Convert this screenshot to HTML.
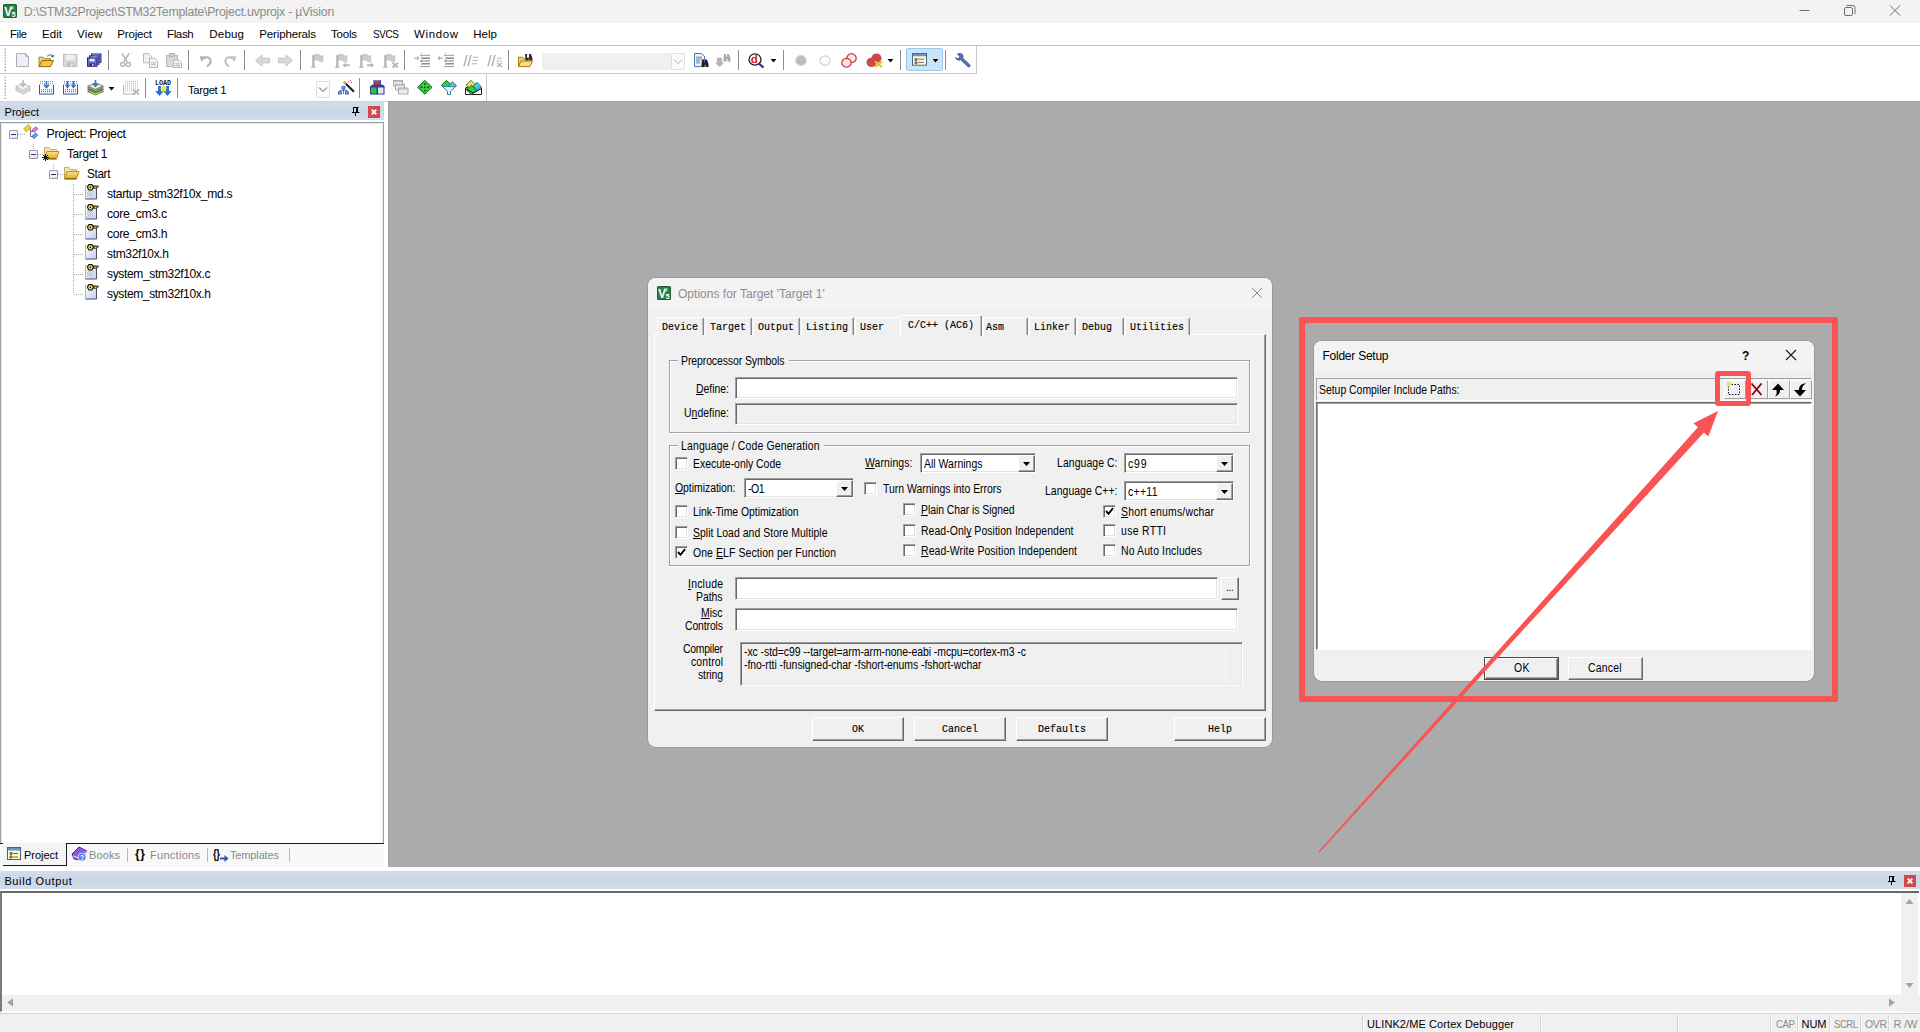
<!DOCTYPE html><html><head><meta charset="utf-8"><title>uVision</title><style>
html,body{margin:0;padding:0;}
body{width:1920px;height:1032px;overflow:hidden;background:#fff;position:relative;font-family:"Liberation Sans",sans-serif;}
div,span.t,svg{position:absolute;box-sizing:border-box;}
span.t{white-space:pre;display:block;}
u{text-decoration:underline;text-underline-offset:1px;text-decoration-thickness:1px;}
.sunk{border:1px solid;border-color:#a0a0a0 #fff #fff #a0a0a0;box-shadow:inset 1px 1px 0 #696969,inset -1px -1px 0 #e3e3e3;}
.btn{background:#f0f0f0;border:1px solid;border-color:#fff #696969 #696969 #fff;box-shadow:inset -1px -1px 0 #a0a0a0,inset 1px 1px 0 #f0f0f0;}
.cb{width:13px;height:13px;background:#fff;border:1px solid #333;}
.gb{border:1px solid #a0a0a0;box-shadow:1px 1px 0 #fff, inset 1px 1px 0 #fff;}
</style></head><body><div style="left:0px;top:0px;width:1920px;height:22.5px;background:#f3f3f3;"></div>
<svg style="left:3px;top:4px;" width="14" height="14" viewBox="0 0 14 14"><g transform="scale(1.0)"><rect x="0" y="0" width="14" height="14" rx="1.6" fill="#2f7d46"/>
<rect x="0.5" y="0.5" width="13" height="13" rx="1.4" fill="none" stroke="#215c33" stroke-width="1"/>
<text x="1.300" y="11.600" font-family="Liberation Sans, sans-serif" font-weight="700" font-size="12" fill="#fff" textLength="7.600" lengthAdjust="spacingAndGlyphs">V</text>
<text x="7.300" y="5.400" font-family="Liberation Sans, sans-serif" font-weight="700" font-size="5.500" fill="#e4f3e8">µ</text>
<text x="8.700" y="12.600" font-family="Liberation Sans, sans-serif" font-weight="700" font-size="6.800" fill="#fff">5</text></g></svg>
<span class="t" style="left:23.8px;top:4px;font:400 12.4px/16px 'Liberation Sans', sans-serif;color:#8b8b8b;letter-spacing:-0.270px;">D:\STM32Project\STM32Template\Project.uvprojx - µVision</span>
<svg style="left:1790px;top:0px;" width="130" height="22" viewBox="0 0 130 22"><g stroke="#6e6e6e" stroke-width="1" fill="none">
<path d="M9.5 10.5h10"/>
<rect x="54.5" y="7.5" width="8" height="8" rx="1.5"/><path d="M56.5 5.5h6.5a2 2 0 0 1 2 2v6.5"/>
<path d="M100 5.5l10 10M110 5.5l-10 10"/></g></svg>
<span class="t" style="left:9.5px;top:27px;font:400 11.5px/15px 'Liberation Sans', sans-serif;color:#000;letter-spacing:-0.359px;transform:scaleX(0.9741);transform-origin:0 0;">File</span>
<span class="t" style="left:42px;top:27px;font:400 11.5px/15px 'Liberation Sans', sans-serif;color:#000;letter-spacing:0.061px;">Edit</span>
<span class="t" style="left:77px;top:27px;font:400 11.5px/15px 'Liberation Sans', sans-serif;color:#000;letter-spacing:0.194px;">View</span>
<span class="t" style="left:117.3px;top:27px;font:400 11.5px/15px 'Liberation Sans', sans-serif;color:#000;letter-spacing:-0.182px;">Project</span>
<span class="t" style="left:167.3px;top:27px;font:400 11.5px/15px 'Liberation Sans', sans-serif;color:#000;letter-spacing:-0.350px;transform:scaleX(0.9992);transform-origin:0 0;">Flash</span>
<span class="t" style="left:209.3px;top:27px;font:400 11.5px/15px 'Liberation Sans', sans-serif;color:#000;letter-spacing:0.203px;">Debug</span>
<span class="t" style="left:259.3px;top:27px;font:400 11.5px/15px 'Liberation Sans', sans-serif;color:#000;letter-spacing:-0.147px;">Peripherals</span>
<span class="t" style="left:331px;top:27px;font:400 11.5px/15px 'Liberation Sans', sans-serif;color:#000;letter-spacing:-0.212px;">Tools</span>
<span class="t" style="left:373.3px;top:27px;font:400 11.5px/15px 'Liberation Sans', sans-serif;color:#000;letter-spacing:-0.410px;transform:scaleX(0.8542);transform-origin:0 0;">SVCS</span>
<span class="t" style="left:414px;top:27px;font:400 11.5px/15px 'Liberation Sans', sans-serif;color:#000;letter-spacing:0.620px;">Window</span>
<span class="t" style="left:473.3px;top:27px;font:400 11.5px/15px 'Liberation Sans', sans-serif;color:#000;letter-spacing:0.016px;">Help</span>
<div style="left:0px;top:45px;width:1920px;height:1px;background:#c0c0c0;"></div>
<div style="left:0px;top:73px;width:977px;height:1px;background:#c8c8c8;"></div>
<div style="left:976px;top:46px;width:1px;height:28px;background:#c8c8c8;"></div>
<div style="left:486px;top:74px;width:1px;height:28px;background:#c8c8c8;"></div>
<div style="left:0px;top:101px;width:487px;height:1px;background:#d4d4d4;"></div>
<svg style="left:4px;top:48px;" width="3" height="24" viewBox="0 0 3 24"><rect x="0.5" y="0.5" width="1.6" height="1.6" fill="#b4b4b4"/><rect x="0.5" y="3.5" width="1.6" height="1.6" fill="#b4b4b4"/><rect x="0.5" y="6.5" width="1.6" height="1.6" fill="#b4b4b4"/><rect x="0.5" y="9.5" width="1.6" height="1.6" fill="#b4b4b4"/><rect x="0.5" y="12.5" width="1.6" height="1.6" fill="#b4b4b4"/><rect x="0.5" y="15.5" width="1.6" height="1.6" fill="#b4b4b4"/><rect x="0.5" y="18.5" width="1.6" height="1.6" fill="#b4b4b4"/><rect x="0.5" y="21.5" width="1.6" height="1.6" fill="#b4b4b4"/></svg><svg style="left:16px;top:52.5px;" width="14" height="16" viewBox="0 0 14 16"><g transform="scale(1,.9375)"><path d="M0.5 0.5h9l3 3v11h-12z" fill="#efeff8" stroke="#a9a9b6"/><path d="M9.5 0.5v3h3" fill="#dcdce8" stroke="#a9a9b6"/></g></svg><svg style="left:38px;top:52.5px;" width="17" height="16" viewBox="0 0 17 16"><g transform="scale(1,.9375)"><path d="M1 14.5v-10h4l1.5 1.5h6v3" fill="#f3d77a" stroke="#a57a1a"/>
<path d="M1 14.5l3-6.5h11.5l-3 6.5z" fill="#f6c638" stroke="#8a6412"/>
<path d="M9.5 3.6c1.500-2.200 4-2.200 5 .2" fill="none" stroke="#5a6f8c" stroke-width="1.100"/><path d="M15.800 1.600l-.3 3.300-2.800-1.200z" fill="#3f587c"/></g></svg><svg style="left:63px;top:52.5px;" width="15" height="16" viewBox="0 0 15 16"><g transform="scale(1,.9375)"><rect x="0.5" y="1.5" width="13.5" height="13" fill="#d9d9d9" stroke="#c2c2c2"/><rect x="3" y="2" width="8.5" height="5.500" fill="#f1f1f1"/><rect x="4" y="10" width="7" height="4.500" fill="#bdbdbd"/><rect x="7.500" y="11" width="2.200" height="3" fill="#eee"/></g></svg><svg style="left:87px;top:52.5px;" width="15" height="16" viewBox="0 0 15 16"><g transform="scale(1,.9375)"><rect x="4.5" y="1.0" width="9.500" height="9" fill="#8084d8" stroke="#2b2b78"/><rect x="6.5" y="2.0" width="5" height="2.800" fill="#e6e9fb"/><rect x="6.5" y="7.0" width="5" height="3" fill="#2b2b78"/><rect x="9" y="7.7" width="1.500" height="2" fill="#cfd3ee"/><rect x="2.5" y="3.0" width="9.500" height="9" fill="#7478d2" stroke="#2b2b78"/><rect x="4.5" y="4.0" width="5" height="2.800" fill="#e6e9fb"/><rect x="4.5" y="9.0" width="5" height="3" fill="#2b2b78"/><rect x="7" y="9.7" width="1.500" height="2" fill="#cfd3ee"/><rect x="0.5" y="5.2" width="9.500" height="9" fill="#6569cc" stroke="#2b2b78"/><rect x="2.5" y="6.2" width="5" height="2.800" fill="#e6e9fb"/><rect x="2.5" y="11.2" width="5" height="3" fill="#2b2b78"/><rect x="5" y="11.9" width="1.500" height="2" fill="#cfd3ee"/></g></svg><div style="left:108px;top:50px;width:1px;height:20px;background:#8d8d8d;"></div><svg style="left:120px;top:52.5px;" width="11" height="16" viewBox="0 0 11 16"><g transform="scale(1,.9375)"><path d="M2 0.5l5.2 9M9 0.5l-5.2 9" stroke="#b5b5b5" stroke-width="1.6" fill="none"/><circle cx="2.6" cy="12.2" r="2.1" fill="none" stroke="#b5b5b5" stroke-width="1.5"/><circle cx="8.4" cy="12.2" r="2.1" fill="none" stroke="#b5b5b5" stroke-width="1.5"/></g></svg><svg style="left:143px;top:52.5px;" width="15" height="16" viewBox="0 0 15 16"><g transform="scale(1,.9375)"><path d="M0.5 0.5h5l3 3v7h-8z" fill="#efefef" stroke="#b5b5b5"/><path d="M6.5 5.5h5l3 3v7h-8z" fill="#f4f4f4" stroke="#b5b5b5"/><path d="M8 10.5h5M8 12.5h5" stroke="#b5b5b5"/></g></svg><svg style="left:166px;top:52.5px;" width="16" height="16" viewBox="0 0 16 16"><g transform="scale(1,.9375)"><rect x="0.5" y="2.5" width="11" height="12" fill="#d9d9d9" stroke="#b5b5b5"/><rect x="3.5" y="0.5" width="5" height="3.5" fill="#cfcfcf" stroke="#b5b5b5"/><path d="M7.5 7.5h5l3 3v5h-8z" fill="#f4f4f4" stroke="#b5b5b5"/><path d="M9 11.5h5M9 13.5h5" stroke="#b5b5b5"/></g></svg><div style="left:188px;top:50px;width:1px;height:20px;background:#8d8d8d;"></div><svg style="left:199px;top:52.5px;" width="14" height="16" viewBox="0 0 14 16"><g transform="scale(1,.9375)"><path d="M4 6.5c5-4.5 9.5 0 6.5 5.5l-2.5 2.5" fill="none" stroke="#b5b5b5" stroke-width="2.2"/><path d="M0.5 3.5l6.5 0-4.5 6z" fill="#b5b5b5"/></g></svg><svg style="left:223px;top:52.5px;" width="14" height="16" viewBox="0 0 14 16"><g transform="scale(1,.9375)"><path d="M10 6.5c-5-4.5-9.5 0-6.5 5.5l2.5 2.5" fill="none" stroke="#c2c2c2" stroke-width="2.2"/><path d="M13.5 3.5l-6.5 0 4.5 6z" fill="#c2c2c2"/></g></svg><div style="left:244px;top:50px;width:1px;height:20px;background:#8d8d8d;"></div><svg style="left:255px;top:52.5px;" width="15" height="16" viewBox="0 0 15 16"><g transform="scale(1,.9375)"><path d="M0.5 8l6.5-6v3.5h7.5v5h-7.5v3.5z" fill="#d9d9d9" stroke="#c4c4c4"/></g></svg><svg style="left:278px;top:52.5px;" width="15" height="16" viewBox="0 0 15 16"><g transform="scale(1,.9375)"><path d="M14.5 8l-6.5-6v3.5h-7.5v5h7.5v3.5z" fill="#d9d9d9" stroke="#c4c4c4"/></g></svg><div style="left:300px;top:50px;width:1px;height:20px;background:#8d8d8d;"></div><svg style="left:311px;top:52.5px;" width="13" height="16" viewBox="0 0 13 16"><g transform="scale(1,.9375)"><path d="M1.200 2.500h2.300v12h1v1.200h-4.300v-1.200h1z" fill="#b5b5b5"/><path d="M3.500 2.200c1.500-1.600 3.200-1.200 4.400-.2 1.300 1 2.600 1.400 3.900 1v6.200c-1.500.6-2.800 0-4-1-1.300-1-2.800-1.300-4.300 0z" fill="#cdcdcd" stroke="#b5b5b5" stroke-width=".7"/></g></svg><svg style="left:335px;top:52.5px;" width="15" height="16" viewBox="0 0 15 16"><g transform="scale(1,.9375)"><path d="M1.200 2.500h2.300v12h1v1.200h-4.300v-1.200h1z" fill="#b5b5b5"/><path d="M3.500 2.200c1.500-1.600 3.200-1.200 4.400-.2 1.300 1 2.600 1.400 3.900 1v6.200c-1.500.6-2.800 0-4-1-1.300-1-2.800-1.300-4.300 0z" fill="#cdcdcd" stroke="#b5b5b5" stroke-width=".7"/><path d="M14.500 13h-4" stroke="#b5b5b5" stroke-width="2"/><path d="M7.500 13l3.200-2.800v5.600z" fill="#b5b5b5"/></g></svg><svg style="left:359px;top:52.5px;" width="15" height="16" viewBox="0 0 15 16"><g transform="scale(1,.9375)"><path d="M1.200 2.500h2.300v12h1v1.200h-4.300v-1.200h1z" fill="#b5b5b5"/><path d="M3.500 2.200c1.500-1.600 3.200-1.200 4.400-.2 1.300 1 2.600 1.400 3.900 1v6.200c-1.500.6-2.800 0-4-1-1.300-1-2.800-1.300-4.300 0z" fill="#cdcdcd" stroke="#b5b5b5" stroke-width=".7"/><path d="M8 13h4" stroke="#b5b5b5" stroke-width="2"/><path d="M15 13l-3.200-2.800v5.600z" fill="#b5b5b5"/></g></svg><svg style="left:383px;top:52.5px;" width="16" height="16" viewBox="0 0 16 16"><g transform="scale(1,.9375)"><path d="M1.200 2.500h2.300v12h1v1.200h-4.300v-1.200h1z" fill="#b5b5b5"/><path d="M3.500 2.200c1.500-1.600 3.200-1.200 4.400-.2 1.300 1 2.600 1.400 3.900 1v6.200c-1.500.6-2.800 0-4-1-1.300-1-2.800-1.300-4.300 0z" fill="#cdcdcd" stroke="#b5b5b5" stroke-width=".7"/><path d="M9.500 10.500l5.500 5M15 10.500l-5.500 5" stroke="#b5b5b5" stroke-width="1.900" fill="none"/></g></svg><div style="left:404px;top:50px;width:1px;height:20px;background:#8d8d8d;"></div><svg style="left:414px;top:52.5px;" width="16" height="16" viewBox="0 0 16 16"><g transform="scale(1,.9375)"><path d="M6 2.5h10M6 14.5h10" stroke="#9a9a9a" stroke-width="1"/><path d="M8 5.500h8M8 11.500h8" stroke="#8a8a8a" stroke-width="1.600"/><path d="M6 8.500h10" stroke="#8a8a8a" stroke-width="1.200"/><path d="M0 5.5h5M3 3.5l2 2-2 2" stroke="#9a9a9a" fill="none"/><path d="M7.5 0v16" stroke="#9a9a9a" stroke-dasharray="1 1"/></g></svg><svg style="left:438px;top:52.5px;" width="16" height="16" viewBox="0 0 16 16"><g transform="scale(1,.9375)"><path d="M6 2.5h10M6 14.5h10" stroke="#9a9a9a" stroke-width="1"/><path d="M8 5.500h8M8 11.500h8" stroke="#8a8a8a" stroke-width="1.600"/><path d="M6 8.500h10" stroke="#8a8a8a" stroke-width="1.200"/><path d="M0 5.5h5M2 3.5l-2 2 2 2" stroke="#9a9a9a" fill="none"/><path d="M7.5 0v16" stroke="#9a9a9a" stroke-dasharray="1 1"/></g></svg><svg style="left:463px;top:52.5px;" width="15" height="16" viewBox="0 0 15 16"><g transform="scale(1,.9375)"><path d="M4 2l-3 12M8 2l-3 12" stroke="#b5b5b5" stroke-width="1.6"/><path d="M10 4.5h5M9.5 8h5M9 11.500h5" stroke="#b5b5b5" stroke-width="1.1"/></g></svg><svg style="left:487px;top:52.5px;" width="16" height="16" viewBox="0 0 16 16"><g transform="scale(1,.9375)"><path d="M4 2l-3 12M8 2l-3 12" stroke="#b5b5b5" stroke-width="1.6"/><path d="M10 5.500h5M9.500 8.500h5" stroke="#b5b5b5" stroke-width="1.1"/><path d="M10 10.500l5 4.500M15 10.500l-5 4.500" stroke="#b5b5b5" stroke-width="1.4"/></g></svg><div style="left:508px;top:50px;width:1px;height:20px;background:#8d8d8d;"></div><svg style="left:518px;top:52.5px;" width="16" height="16" viewBox="0 0 16 16"><g transform="scale(1,.9375)"><path d="M0.5 14.5v-10h4l1.5 1.5h6v3" fill="#f5cf65" stroke="#a57a1a"/><path d="M0.5 14.5l2.500-6h11.500l-2.500 6z" fill="#f9dc7c" stroke="#a57a1a"/>
<path d="M7 1h2v4h2v-4h2l1.500 5v2h-3v-2h-1v2h-3v-2z" fill="#2b2b2b"/></g></svg><div style="left:542px;top:53px;width:143px;height:17px;background:#f0f0f0;border-radius:2px;"></div><div style="left:671px;top:53px;width:14px;height:17px;background:#fbfbfb;border:1px solid #e0e0e0;border-radius:2px;"></div><svg style="left:673px;top:58px;" width="10" height="7" viewBox="0 0 10 7"><path d="M1 1.500l4 4 4-4" fill="none" stroke="#b0b0b0" stroke-width="1"/></svg><svg style="left:693px;top:52.5px;" width="16" height="16" viewBox="0 0 16 16"><g transform="scale(1,.9375)"><path d="M1.500 0.500h7l3 3v11h-10z" fill="#eef3fb" stroke="#4d6fa8"/><path d="M3 4.500h6M3 6.500h6M3 8.500h4M3 10.500h4" stroke="#4d6fa8" stroke-width=".9"/>
<path d="M9 7h2v3h1v-3h2l1.500 5v3h-3v-2.500h-1v2.500h-3v-3z" fill="#222"/></g></svg><svg style="left:716px;top:52.5px;" width="16" height="16" viewBox="0 0 16 16"><g transform="scale(1,.9375)"><path d="M1 5h5v5h2.500l-5 5-5-5h2.500z" fill="#b5b5b5"/><path d="M8 1h2v3h1v-3h2l1.500 5v3h-3v-2.500h-1v2.500h-3v-3z" fill="#a9a9a9"/></g></svg><div style="left:738px;top:50px;width:1px;height:20px;background:#8d8d8d;"></div><svg style="left:748px;top:52.5px;" width="17" height="16" viewBox="0 0 17 16"><g transform="scale(1,.9375)"><circle cx="7" cy="7" r="6" fill="#fff" stroke="#1e1e1e" stroke-width="1.300"/><path d="M11 11.500l4.500 4" stroke="#223a8f" stroke-width="2.400"/>
<text x="2.800" y="10.800" font-family="Liberation Sans, sans-serif" font-weight="700" font-size="11.500" fill="#e01b1b">d</text></g></svg><svg style="left:770px;top:59px;" width="7" height="4" viewBox="0 0 7 4"><path d="M0.6 0h5.8l-2.9 3.500z" fill="#000"/></svg><div style="left:783px;top:50px;width:1px;height:20px;background:#8d8d8d;"></div><svg style="left:795px;top:52.5px;" width="13" height="16" viewBox="0 0 13 16"><g transform="scale(1,.9375)"><circle cx="6" cy="8" r="5.300" fill="#bdbdbd" stroke="#cfcfcf"/></g></svg><svg style="left:819px;top:52.5px;" width="13" height="16" viewBox="0 0 13 16"><g transform="scale(1,.9375)"><circle cx="6" cy="8" r="5" fill="#fdfdfd" stroke="#cfcfcf" stroke-width="1.200"/></g></svg><svg style="left:841px;top:52.5px;" width="17" height="16" viewBox="0 0 17 16"><g transform="scale(1,.9375)"><circle cx="10.500" cy="5.500" r="4.700" fill="#fde6e6" stroke="#c82222" stroke-width="1.100"/><circle cx="5.500" cy="10.500" r="4.700" fill="#fde6e6" stroke="#c82222" stroke-width="1.100"/></g></svg><svg style="left:866px;top:52.5px;" width="18" height="16" viewBox="0 0 18 16"><g transform="scale(1,.9375)"><circle cx="10.500" cy="5.500" r="5" fill="#cc4a4a"/><circle cx="5.500" cy="10" r="5" fill="#cc4a4a"/><path d="M9 9l7 6M16 9l-7 6" stroke="#e8c51d" stroke-width="2.200"/></g></svg><svg style="left:887px;top:59px;" width="7" height="4" viewBox="0 0 7 4"><path d="M0.6 0h5.8l-2.9 3.500z" fill="#000"/></svg><div style="left:900px;top:50px;width:1px;height:20px;background:#8d8d8d;"></div><div style="left:906px;top:48px;width:37px;height:23px;background:#cce4f7;border:1px solid #9bcaf0;border-radius:2px;"></div><svg style="left:912px;top:53px;" width="15" height="14" viewBox="0 0 15 14"><g transform="scale(1,.9375)"><rect x="0.500" y="0.500" width="14" height="12.500" fill="#ffffc4" stroke="#47618f"/><rect x="1" y="1" width="13" height="2.500" fill="#6a8fd0"/><path d="M3 6h2v2h-2zM3 9.500h2v2h-2zM6 6.500h6M6 10h6" stroke="#556" stroke-width=".9" fill="#9a9"/></g></svg><svg style="left:932px;top:59px;" width="7" height="4" viewBox="0 0 7 4"><path d="M0.6 0h5.8l-2.9 3.500z" fill="#000"/></svg><div style="left:945px;top:50px;width:1px;height:20px;background:#8d8d8d;"></div><svg style="left:955px;top:52.5px;" width="16" height="16" viewBox="0 0 16 16"><g transform="scale(1,.9375)"><path d="M2.500 1c2-1.500 5-.5 5.500 2 .2 1-.1 1.800-.4 2.400l7.400 7.400c.8 1-.9 2.700-1.900 1.900l-7.400-7.400c-2 .9-4.500 0-5.200-2.300l2.600 1.200 2-2z" fill="#4f79b8" stroke="#2d4f87" stroke-width=".8"/></g></svg>
<svg style="left:4px;top:76px;" width="3" height="24" viewBox="0 0 3 24"><rect x="0.5" y="0.5" width="1.6" height="1.6" fill="#b4b4b4"/><rect x="0.5" y="3.5" width="1.6" height="1.6" fill="#b4b4b4"/><rect x="0.5" y="6.5" width="1.6" height="1.6" fill="#b4b4b4"/><rect x="0.5" y="9.5" width="1.6" height="1.6" fill="#b4b4b4"/><rect x="0.5" y="12.5" width="1.6" height="1.6" fill="#b4b4b4"/><rect x="0.5" y="15.5" width="1.6" height="1.6" fill="#b4b4b4"/><rect x="0.5" y="18.5" width="1.6" height="1.6" fill="#b4b4b4"/><rect x="0.5" y="21.5" width="1.6" height="1.6" fill="#b4b4b4"/></svg><svg style="left:15px;top:80px;" width="16" height="16" viewBox="0 0 16 16"><g transform="scale(1,.9375)"><g fill="#f1f1f1" stroke="#b5b5b5" stroke-width=".9"><path d="M8 8l7.500 3-7.500 4-7.500-4z"/><path d="M8 6l7.500 3-7.500 4-7.500-4z"/><path d="M8 4l7.500 3-7.500 4-7.500-4z"/></g><path d="M8 0v6M5.500 3.500l2.500 3 2.500-3" stroke="#b5b5b5" stroke-width="1.500" fill="none"/></g></svg><svg style="left:39px;top:80px;" width="15" height="16" viewBox="0 0 15 16"><g transform="scale(1,.9375)"><path d="M0.500 5v10h14v-10" fill="none" stroke="#2c4a8c"/><rect x="2" y="10" width="1" height="1" fill="#2c4a8c"/><rect x="4" y="10" width="1" height="1" fill="#2c4a8c"/><rect x="6" y="10" width="1" height="1" fill="#2c4a8c"/><rect x="8" y="10" width="1" height="1" fill="#2c4a8c"/><rect x="10" y="10" width="1" height="1" fill="#2c4a8c"/><rect x="12" y="10" width="1" height="1" fill="#2c4a8c"/><rect x="2" y="12" width="1" height="1" fill="#2c4a8c"/><rect x="4" y="12" width="1" height="1" fill="#2c4a8c"/><rect x="6" y="12" width="1" height="1" fill="#2c4a8c"/><rect x="8" y="12" width="1" height="1" fill="#2c4a8c"/><rect x="10" y="12" width="1" height="1" fill="#2c4a8c"/><rect x="12" y="12" width="1" height="1" fill="#2c4a8c"/><rect x="1" y="1" width="1" height="1" fill="#5c7ab8"/><rect x="3" y="1" width="1" height="1" fill="#5c7ab8"/><rect x="5" y="1" width="1" height="1" fill="#5c7ab8"/><rect x="7" y="1" width="1" height="1" fill="#5c7ab8"/><rect x="9" y="1" width="1" height="1" fill="#5c7ab8"/><rect x="11" y="1" width="1" height="1" fill="#5c7ab8"/><rect x="13" y="1" width="1" height="1" fill="#5c7ab8"/><rect x="1" y="3" width="1" height="1" fill="#5c7ab8"/><rect x="3" y="3" width="1" height="1" fill="#5c7ab8"/><rect x="5" y="3" width="1" height="1" fill="#5c7ab8"/><rect x="7" y="3" width="1" height="1" fill="#5c7ab8"/><rect x="9" y="3" width="1" height="1" fill="#5c7ab8"/><rect x="11" y="3" width="1" height="1" fill="#5c7ab8"/><rect x="13" y="3" width="1" height="1" fill="#5c7ab8"/><path d="M7.500 1v6M5 5l2.500 3 2.500-3" stroke="#2f74d0" stroke-width="1.600" fill="none"/></g></svg><svg style="left:63px;top:80px;" width="15" height="16" viewBox="0 0 15 16"><g transform="scale(1,.9375)"><path d="M0.500 5v10h14v-10" fill="none" stroke="#2c4a8c"/><rect x="2" y="10" width="1" height="1" fill="#2c4a8c"/><rect x="4" y="10" width="1" height="1" fill="#2c4a8c"/><rect x="6" y="10" width="1" height="1" fill="#2c4a8c"/><rect x="8" y="10" width="1" height="1" fill="#2c4a8c"/><rect x="10" y="10" width="1" height="1" fill="#2c4a8c"/><rect x="12" y="10" width="1" height="1" fill="#2c4a8c"/><rect x="2" y="12" width="1" height="1" fill="#2c4a8c"/><rect x="4" y="12" width="1" height="1" fill="#2c4a8c"/><rect x="6" y="12" width="1" height="1" fill="#2c4a8c"/><rect x="8" y="12" width="1" height="1" fill="#2c4a8c"/><rect x="10" y="12" width="1" height="1" fill="#2c4a8c"/><rect x="12" y="12" width="1" height="1" fill="#2c4a8c"/><rect x="1" y="1" width="1" height="1" fill="#5c7ab8"/><rect x="3" y="1" width="1" height="1" fill="#5c7ab8"/><rect x="5" y="1" width="1" height="1" fill="#5c7ab8"/><rect x="7" y="1" width="1" height="1" fill="#5c7ab8"/><rect x="9" y="1" width="1" height="1" fill="#5c7ab8"/><rect x="11" y="1" width="1" height="1" fill="#5c7ab8"/><rect x="13" y="1" width="1" height="1" fill="#5c7ab8"/><rect x="1" y="3" width="1" height="1" fill="#5c7ab8"/><rect x="3" y="3" width="1" height="1" fill="#5c7ab8"/><rect x="5" y="3" width="1" height="1" fill="#5c7ab8"/><rect x="7" y="3" width="1" height="1" fill="#5c7ab8"/><rect x="9" y="3" width="1" height="1" fill="#5c7ab8"/><rect x="11" y="3" width="1" height="1" fill="#5c7ab8"/><rect x="13" y="3" width="1" height="1" fill="#5c7ab8"/><path d="M4.500 1v6M2.500 5l2 3 2-3M10.500 1v6M8.500 5l2 3 2-3" stroke="#2f74d0" stroke-width="1.500" fill="none"/></g></svg><svg style="left:87px;top:80px;" width="17" height="16" viewBox="0 0 17 16"><g transform="scale(1,.9375)"><g stroke="#4a5a3a" stroke-width=".7"><path d="M8.500 9.500l8 3-8 3.500-8-3.500z" fill="#d7e36a"/><path d="M8.500 7.500l8 3-8 3.500-8-3.500z" fill="#4fae4a"/><path d="M8.500 5.500l8 3-8 3.500-8-3.500z" fill="#8fbf8a"/><path d="M8.500 3.500l8 3-8 3.500-8-3.500z" fill="#dfe7ec"/></g>
<path d="M8.500 0v5M6 3.500l2.500 3 2.500-3" stroke="#2f74d0" stroke-width="1.600" fill="none"/></g></svg><svg style="left:108px;top:87px;" width="7" height="4" viewBox="0 0 7 4"><path d="M0.6 0h5.8l-2.9 3.500z" fill="#000"/></svg><svg style="left:123px;top:80px;" width="17" height="16" viewBox="0 0 17 16"><g transform="scale(1,.9375)"><path d="M0.500 5v10h12" fill="none" stroke="#b5b5b5"/><rect x="2" y="1" width="1" height="1" fill="#b5b5b5"/><rect x="4" y="1" width="1" height="1" fill="#b5b5b5"/><rect x="6" y="1" width="1" height="1" fill="#b5b5b5"/><rect x="8" y="1" width="1" height="1" fill="#b5b5b5"/><rect x="10" y="1" width="1" height="1" fill="#b5b5b5"/><rect x="12" y="1" width="1" height="1" fill="#b5b5b5"/><rect x="14" y="1" width="1" height="1" fill="#b5b5b5"/><rect x="2" y="3" width="1" height="1" fill="#b5b5b5"/><rect x="4" y="3" width="1" height="1" fill="#b5b5b5"/><rect x="6" y="3" width="1" height="1" fill="#b5b5b5"/><rect x="8" y="3" width="1" height="1" fill="#b5b5b5"/><rect x="10" y="3" width="1" height="1" fill="#b5b5b5"/><rect x="12" y="3" width="1" height="1" fill="#b5b5b5"/><rect x="14" y="3" width="1" height="1" fill="#b5b5b5"/><rect x="2" y="5" width="1" height="1" fill="#b5b5b5"/><rect x="4" y="5" width="1" height="1" fill="#b5b5b5"/><rect x="6" y="5" width="1" height="1" fill="#b5b5b5"/><rect x="8" y="5" width="1" height="1" fill="#b5b5b5"/><rect x="10" y="5" width="1" height="1" fill="#b5b5b5"/><rect x="12" y="5" width="1" height="1" fill="#b5b5b5"/><rect x="14" y="5" width="1" height="1" fill="#b5b5b5"/><rect x="2" y="7" width="1" height="1" fill="#b5b5b5"/><rect x="4" y="7" width="1" height="1" fill="#b5b5b5"/><rect x="6" y="7" width="1" height="1" fill="#b5b5b5"/><rect x="8" y="7" width="1" height="1" fill="#b5b5b5"/><rect x="10" y="7" width="1" height="1" fill="#b5b5b5"/><rect x="12" y="7" width="1" height="1" fill="#b5b5b5"/><rect x="14" y="7" width="1" height="1" fill="#b5b5b5"/><rect x="2" y="9" width="1" height="1" fill="#b5b5b5"/><rect x="4" y="9" width="1" height="1" fill="#b5b5b5"/><rect x="6" y="9" width="1" height="1" fill="#b5b5b5"/><rect x="8" y="9" width="1" height="1" fill="#b5b5b5"/><rect x="10" y="9" width="1" height="1" fill="#b5b5b5"/><rect x="12" y="9" width="1" height="1" fill="#b5b5b5"/><rect x="14" y="9" width="1" height="1" fill="#b5b5b5"/><rect x="2" y="11" width="1" height="1" fill="#b5b5b5"/><rect x="4" y="11" width="1" height="1" fill="#b5b5b5"/><rect x="6" y="11" width="1" height="1" fill="#b5b5b5"/><rect x="8" y="11" width="1" height="1" fill="#b5b5b5"/><rect x="10" y="11" width="1" height="1" fill="#b5b5b5"/><rect x="12" y="11" width="1" height="1" fill="#b5b5b5"/><rect x="14" y="11" width="1" height="1" fill="#b5b5b5"/><path d="M10 10l6 5.500M16 10l-6 5.500" stroke="#b5b5b5" stroke-width="1.800"/></g></svg><div style="left:145px;top:78px;width:1px;height:20px;background:#8d8d8d;"></div><svg style="left:155px;top:78px;" width="17" height="19" viewBox="0 0 17 19"><text x="0" y="6.500" font-family="Liberation Mono, monospace" font-weight="700" font-size="6.800" textLength="16" lengthAdjust="spacingAndGlyphs" fill="#111">LOAD</text>
<path d="M3 8v5h-2.800l4.300 5 4.300-5h-2.800v-5z" fill="#2d6fd6"/><path d="M11 8v5h-2.800l4.300 5 4.300-5h-2.800v-5z" fill="#2d6fd6"/><path d="M8.500 7l1 2.500 2.500.5-2 1.500.5 2.500-2-1.500-2 1.500.5-2.500-2-1.500 2.500-.5z" fill="#eef03a" stroke="#b9bb20" stroke-width=".4"/></svg><div style="left:177px;top:78px;width:1px;height:20px;background:#8d8d8d;"></div><div style="left:316px;top:81px;width:14px;height:17px;background:#fdfdfd;border:1px solid #dcdcdc;border-radius:2px;"></div><svg style="left:318px;top:86px;" width="10" height="7" viewBox="0 0 10 7"><path d="M1 1.500l4 4 4-4" fill="none" stroke="#555" stroke-width="1"/></svg><svg style="left:338px;top:80px;" width="17" height="16" viewBox="0 0 17 16"><g transform="scale(1,.9375)"><path d="M6 2l10 10.500" stroke="#222" stroke-width="2.200"/><path d="M6 2l2 2" stroke="#d8b642" stroke-width="2.200"/>
<path d="M10.500 1.500l.5 1M13 3l1-.5M12.500 0l0 1" stroke="#d23a2a" stroke-width="1"/>
<g stroke="#2b58a8" fill="#7fa6e6" stroke-width=".8"><rect x="4" y="7" width="3" height="2.500"/><rect x="0.500" y="12.500" width="3" height="2.500"/><rect x="7.500" y="12.500" width="3" height="2.500"/><path d="M5.500 9.500v1.500M2 12.500v-1.500h7v1.500M5.500 11v4" fill="none"/></g></g></svg><div style="left:359px;top:78px;width:1px;height:20px;background:#8d8d8d;"></div><svg style="left:370px;top:80px;" width="15" height="16" viewBox="0 0 15 16"><g transform="scale(1,.9375)"><rect x="4" y="0.500" width="6.500" height="6.500" fill="#e32b2b" stroke="#3c3c8a"/><path d="M4 0.500h6.500" stroke="#7f7fd0" stroke-width="1.500"/>
<rect x="0.500" y="7.500" width="6.500" height="7.500" fill="#2fbf3a" stroke="#2d3c8a"/><rect x="7.500" y="7.500" width="6.500" height="7.500" fill="#dfe6f7" stroke="#2d3c8a"/><path d="M0.500 7.500l1.500-2h11l1.500 2" fill="#2c3f9a" stroke="#2d3c8a"/></g></svg><svg style="left:393px;top:80px;" width="16" height="16" viewBox="0 0 16 16"><g transform="scale(1,.9375)"><g fill="#ededed" stroke="#a9a9a9"><rect x="0.500" y="0.500" width="9" height="6"/><rect x="2.500" y="4.500" width="9" height="6"/><rect x="5.500" y="8.500" width="9.500" height="6.500"/></g><path d="M1 1.500h8M3 5.500h8M6 9.500h8.500" stroke="#b9b9b9" stroke-width="1.400"/></g></svg><svg style="left:417px;top:80px;" width="16" height="16" viewBox="0 0 16 16"><g transform="scale(1,.9375)"><path d="M7.800 0.500l7.200 7.300-7.200 7.300-7.200-7.300z" fill="#2fd23a" stroke="#0d5d15"/><g fill="#0d3d10"><rect x="7" y="3.500" width="1.600" height="1.600"/><rect x="3.600" y="7" width="1.600" height="1.600"/><rect x="10.400" y="7" width="1.600" height="1.600"/><rect x="7" y="7" width="1.600" height="1.600"/><rect x="7" y="10.500" width="1.600" height="1.600"/></g></g></svg><svg style="left:441px;top:80px;" width="16" height="16" viewBox="0 0 16 16"><g transform="scale(1,.9375)"><path d="M5.500 0.500l5 5-5 5-5-5z" fill="#2fd23a" stroke="#0d5d15"/><path d="M11.500 2l4 4-4 4-4-4z" fill="#48c9e8" stroke="#176a85"/>
<path d="M1.500 7h13l-5 5v3.500h-3v-3.500z" fill="#eaf6fb" stroke="#2a7f9a"/></g></svg><svg style="left:465px;top:80px;" width="17" height="16" viewBox="0 0 17 16"><g transform="scale(1,.9375)"><path d="M0.500 8.500l8-3 8 3v7h-16z" fill="#fff" stroke="#111"/><path d="M6 0.500l5 5-5 5-5-5z" fill="#e8e86a" stroke="#6a6a15"/><path d="M12 2.500l4 4.500-4 4.500-4-4.500z" fill="#48c9e8" stroke="#176a85"/><path d="M6.500 5.500l5 5-5 5-5-5z" fill="#2fd23a" stroke="#0d5d15"/>
<path d="M0.500 9l8 5 8-5" fill="none" stroke="#111"/></g></svg>
<span class="t" style="left:188px;top:83px;font:400 11.5px/15px 'Liberation Sans', sans-serif;color:#000;letter-spacing:-0.355px;transform:scaleX(0.9855);transform-origin:0 0;">Target 1</span>
<div style="left:388px;top:101px;width:1532px;height:766px;background:#ababab;border-top:1px solid #a2a2a2;border-left:1px solid #a2a2a2;"></div>
<div style="left:0px;top:102px;width:384px;height:18px;background:linear-gradient(#d3dde9,#c9d7e6 45%,#cfdcec);"></div>
<span class="t" style="left:4.5px;top:105px;font:400 11px/14px 'Liberation Sans', sans-serif;color:#000;letter-spacing:0.044px;">Project</span>
<svg style="left:351px;top:107px;" width="9" height="11" viewBox="0 0 9 11"><path d="M2 0.5h5.5M2.5 0.5v5M6.5 0v5.5M5.5 0.5v5M1 5.5h7.5M4.5 6v3" stroke="#000" stroke-width="1" fill="none"/></svg>
<div style="left:368px;top:106px;width:12px;height:12px;background:#cf4a4d;"></div><svg style="left:368px;top:106px;" width="12" height="12" viewBox="0 0 12 12"><path d="M3.700 3.700l4.600 4.600M8.300 3.700l-4.600 4.600" stroke="#fff" stroke-width="1.800"/></svg>
<div style="left:0px;top:122px;width:384px;height:721px;background:#fff;border:1px solid #a0a0a0;border-bottom:none;box-shadow:inset 1px 1px 0 #e8e8e8,inset -1px 0 0 #f0f0f0;"></div>
<div style="left:33px;top:144px;width:1px;height:7px;background-image:linear-gradient(#a8a8a8 50%,transparent 50%);background-size:1px 2px;"></div><div style="left:53px;top:164px;width:1px;height:7px;background-image:linear-gradient(#a8a8a8 50%,transparent 50%);background-size:1px 2px;"></div><div style="left:73px;top:184px;width:1px;height:110px;background-image:linear-gradient(#a8a8a8 50%,transparent 50%);background-size:1px 2px;"></div><div style="left:18px;top:134px;width:8px;height:1px;background-image:linear-gradient(90deg,#a8a8a8 50%,transparent 50%);background-size:2px 1px;"></div><div style="left:38px;top:154px;width:5px;height:1px;background-image:linear-gradient(90deg,#a8a8a8 50%,transparent 50%);background-size:2px 1px;"></div><div style="left:58px;top:174px;width:5px;height:1px;background-image:linear-gradient(90deg,#a8a8a8 50%,transparent 50%);background-size:2px 1px;"></div><div style="left:74px;top:194px;width:10px;height:1px;background-image:linear-gradient(90deg,#a8a8a8 50%,transparent 50%);background-size:2px 1px;"></div><div style="left:74px;top:214px;width:10px;height:1px;background-image:linear-gradient(90deg,#a8a8a8 50%,transparent 50%);background-size:2px 1px;"></div><div style="left:74px;top:234px;width:10px;height:1px;background-image:linear-gradient(90deg,#a8a8a8 50%,transparent 50%);background-size:2px 1px;"></div><div style="left:74px;top:254px;width:10px;height:1px;background-image:linear-gradient(90deg,#a8a8a8 50%,transparent 50%);background-size:2px 1px;"></div><div style="left:74px;top:274px;width:10px;height:1px;background-image:linear-gradient(90deg,#a8a8a8 50%,transparent 50%);background-size:2px 1px;"></div><div style="left:74px;top:294px;width:10px;height:1px;background-image:linear-gradient(90deg,#a8a8a8 50%,transparent 50%);background-size:2px 1px;"></div><div style="left:9px;top:130px;width:9px;height:9px;border:1px solid #969696;border-radius:1px;background:linear-gradient(135deg,#fff,#e4e4e4);"></div><div style="left:11px;top:134px;width:5px;height:1px;background:#24358a;"></div><div style="left:29px;top:150px;width:9px;height:9px;border:1px solid #969696;border-radius:1px;background:linear-gradient(135deg,#fff,#e4e4e4);"></div><div style="left:31px;top:154px;width:5px;height:1px;background:#24358a;"></div><div style="left:49px;top:170px;width:9px;height:9px;border:1px solid #969696;border-radius:1px;background:linear-gradient(135deg,#fff,#e4e4e4);"></div><div style="left:51px;top:174px;width:5px;height:1px;background:#24358a;"></div><svg style="left:23px;top:124px;" width="16" height="16" viewBox="0 0 16 16"><path d="M7.500 4.500v8h2.500M7.500 7.500h2.500" fill="none" stroke="#6a6a78" stroke-width="1"/>
<rect x="-3.300" y="-2.100" width="6.600" height="4.200" transform="translate(4.400 4.200) rotate(-40)" fill="#ecd03c" stroke="#b59a20" stroke-width=".6"/>
<rect x="-2.600" y="-1.600" width="5.200" height="3.200" transform="translate(12 5.500) rotate(-40)" fill="#e07ae4" stroke="#a04aa8" stroke-width=".6"/>
<rect x="-2.600" y="-1.600" width="5.200" height="3.200" transform="translate(11.800 11.800) rotate(-40)" fill="#5a9cf0" stroke="#2d62b0" stroke-width=".6"/></svg><svg style="left:43px;top:145px;" width="17" height="16" viewBox="0 0 17 16"><defs><linearGradient id="fo" x1="0" y1="0" x2="0" y2="1"><stop offset="0" stop-color="#fbe28e"/><stop offset="1" stop-color="#e8a91e"/></linearGradient></defs>
<path d="M1.500 13.500v-11h4.500l1.500 2h6v3" fill="#f6e3a6" stroke="#c9ad6a"/><path d="M1.500 13.500l2.500-7h12l-2.500 7z" fill="url(#fo)" stroke="#b98a22"/><path d="M1.500 14h12" stroke="#5f4a12" stroke-width="1"/></svg><svg style="left:42px;top:154px;" width="7" height="7" viewBox="0 0 7 7"><path d="M3.500 0v7M0 3.500h7M1 1l5 5M6 1l-5 5" stroke="#111" stroke-width="1"/></svg><svg style="left:63px;top:165px;" width="17" height="16" viewBox="0 0 17 16"><defs><linearGradient id="fo" x1="0" y1="0" x2="0" y2="1"><stop offset="0" stop-color="#fbe28e"/><stop offset="1" stop-color="#e8a91e"/></linearGradient></defs>
<path d="M1.500 13.500v-11h4.500l1.500 2h6v3" fill="#f6e3a6" stroke="#c9ad6a"/><path d="M1.500 13.500l2.500-7h12l-2.500 7z" fill="url(#fo)" stroke="#b98a22"/><path d="M1.500 14h12" stroke="#5f4a12" stroke-width="1"/></svg><span class="t" style="left:46.6px;top:126px;font:400 12.4px/16px 'Liberation Sans', sans-serif;color:#000;letter-spacing:-0.307px;">Project: Project</span><span class="t" style="left:66.6px;top:146px;font:400 12.4px/16px 'Liberation Sans', sans-serif;color:#000;letter-spacing:-0.366px;transform:scaleX(0.9571);transform-origin:0 0;">Target 1</span><span class="t" style="left:86.6px;top:166px;font:400 12.4px/16px 'Liberation Sans', sans-serif;color:#000;letter-spacing:-0.369px;transform:scaleX(0.9478);transform-origin:0 0;">Start</span><svg style="left:85px;top:184px;" width="15" height="16" viewBox="0 0 15 16"><defs><linearGradient id="fg" x1="0" y1="0" x2="1" y2="1"><stop offset="0" stop-color="#fff"/><stop offset="1" stop-color="#bfcdf2"/></linearGradient></defs><rect x="0.5" y="1.5" width="11" height="13.5" fill="url(#fg)"/><path d="M0.5 15v-13.500h11" fill="none" stroke="#b4b4b4"/><path d="M11.500 2v13h-11" fill="none" stroke="#4a4f68"/><rect x="2" y="6" width="1" height="1" fill="#b9bccb"/><rect x="4" y="6" width="1" height="1" fill="#b9bccb"/><rect x="6" y="6" width="1" height="1" fill="#b9bccb"/><rect x="3" y="7" width="1" height="1" fill="#b9bccb"/><rect x="5" y="7" width="1" height="1" fill="#b9bccb"/><rect x="7" y="7" width="1" height="1" fill="#b9bccb"/><rect x="2" y="8" width="1" height="1" fill="#b9bccb"/><rect x="4" y="8" width="1" height="1" fill="#b9bccb"/><rect x="6" y="8" width="1" height="1" fill="#b9bccb"/><rect x="3" y="9" width="1" height="1" fill="#b9bccb"/><rect x="5" y="9" width="1" height="1" fill="#b9bccb"/><rect x="7" y="9" width="1" height="1" fill="#b9bccb"/><rect x="2" y="10" width="1" height="1" fill="#b9bccb"/><rect x="4" y="10" width="1" height="1" fill="#b9bccb"/><rect x="6" y="10" width="1" height="1" fill="#b9bccb"/><rect x="3" y="11" width="1" height="1" fill="#b9bccb"/><rect x="5" y="11" width="1" height="1" fill="#b9bccb"/><rect x="7" y="11" width="1" height="1" fill="#b9bccb"/><rect x="2" y="12" width="1" height="1" fill="#b9bccb"/><rect x="4" y="12" width="1" height="1" fill="#b9bccb"/><rect x="6" y="12" width="1" height="1" fill="#b9bccb"/><path d="M7.500 2.200h6l-1.200 1.600h-.8l-.6.900-.8-.900h-.7l-.6.900-.8-.900h-.5z" fill="#f1ee3c" stroke="#111" stroke-width=".9"/><path d="M3.900 0.600h3l1.500 2.700-1.500 2.700h-3l-1.500-2.700z" fill="#f1ee3c" stroke="#111" stroke-width="1.100"/><circle cx="5.300" cy="3.300" r=".9" fill="#222"/></svg><span class="t" style="left:106.6px;top:186px;font:400 12.4px/16px 'Liberation Sans', sans-serif;color:#000;letter-spacing:-0.357px;transform:scaleX(0.9792);transform-origin:0 0;">startup_stm32f10x_md.s</span><svg style="left:85px;top:204px;" width="15" height="16" viewBox="0 0 15 16"><defs><linearGradient id="fg" x1="0" y1="0" x2="1" y2="1"><stop offset="0" stop-color="#fff"/><stop offset="1" stop-color="#bfcdf2"/></linearGradient></defs><rect x="0.5" y="1.5" width="11" height="13.5" fill="url(#fg)"/><path d="M0.5 15v-13.500h11" fill="none" stroke="#b4b4b4"/><path d="M11.500 2v13h-11" fill="none" stroke="#4a4f68"/><rect x="2" y="6" width="1" height="1" fill="#b9bccb"/><rect x="4" y="6" width="1" height="1" fill="#b9bccb"/><rect x="6" y="6" width="1" height="1" fill="#b9bccb"/><rect x="3" y="7" width="1" height="1" fill="#b9bccb"/><rect x="5" y="7" width="1" height="1" fill="#b9bccb"/><rect x="7" y="7" width="1" height="1" fill="#b9bccb"/><rect x="2" y="8" width="1" height="1" fill="#b9bccb"/><rect x="4" y="8" width="1" height="1" fill="#b9bccb"/><rect x="6" y="8" width="1" height="1" fill="#b9bccb"/><rect x="3" y="9" width="1" height="1" fill="#b9bccb"/><rect x="5" y="9" width="1" height="1" fill="#b9bccb"/><rect x="7" y="9" width="1" height="1" fill="#b9bccb"/><rect x="2" y="10" width="1" height="1" fill="#b9bccb"/><rect x="4" y="10" width="1" height="1" fill="#b9bccb"/><rect x="6" y="10" width="1" height="1" fill="#b9bccb"/><rect x="3" y="11" width="1" height="1" fill="#b9bccb"/><rect x="5" y="11" width="1" height="1" fill="#b9bccb"/><rect x="7" y="11" width="1" height="1" fill="#b9bccb"/><rect x="2" y="12" width="1" height="1" fill="#b9bccb"/><rect x="4" y="12" width="1" height="1" fill="#b9bccb"/><rect x="6" y="12" width="1" height="1" fill="#b9bccb"/><path d="M7.500 2.200h6l-1.200 1.600h-.8l-.6.900-.8-.900h-.7l-.6.900-.8-.900h-.5z" fill="#f1ee3c" stroke="#111" stroke-width=".9"/><path d="M3.900 0.600h3l1.500 2.700-1.500 2.700h-3l-1.500-2.700z" fill="#f1ee3c" stroke="#111" stroke-width="1.100"/><circle cx="5.300" cy="3.300" r=".9" fill="#222"/></svg><span class="t" style="left:106.6px;top:206px;font:400 12.4px/16px 'Liberation Sans', sans-serif;color:#000;letter-spacing:-0.355px;transform:scaleX(0.9861);transform-origin:0 0;">core_cm3.c</span><svg style="left:85px;top:224px;" width="15" height="16" viewBox="0 0 15 16"><defs><linearGradient id="fg" x1="0" y1="0" x2="1" y2="1"><stop offset="0" stop-color="#fff"/><stop offset="1" stop-color="#bfcdf2"/></linearGradient></defs><rect x="0.5" y="1.5" width="11" height="13.5" fill="url(#fg)"/><path d="M0.5 15v-13.500h11" fill="none" stroke="#b4b4b4"/><path d="M11.500 2v13h-11" fill="none" stroke="#4a4f68"/><path d="M7.500 2.200h6l-1.200 1.600h-.8l-.6.900-.8-.900h-.7l-.6.900-.8-.900h-.5z" fill="#f1ee3c" stroke="#111" stroke-width=".9"/><path d="M3.900 0.600h3l1.500 2.700-1.500 2.700h-3l-1.500-2.700z" fill="#f1ee3c" stroke="#111" stroke-width="1.100"/><circle cx="5.300" cy="3.300" r=".9" fill="#222"/></svg><span class="t" style="left:106.6px;top:226px;font:400 12.4px/16px 'Liberation Sans', sans-serif;color:#000;letter-spacing:-0.356px;transform:scaleX(0.9832);transform-origin:0 0;">core_cm3.h</span><svg style="left:85px;top:244px;" width="15" height="16" viewBox="0 0 15 16"><defs><linearGradient id="fg" x1="0" y1="0" x2="1" y2="1"><stop offset="0" stop-color="#fff"/><stop offset="1" stop-color="#bfcdf2"/></linearGradient></defs><rect x="0.5" y="1.5" width="11" height="13.5" fill="url(#fg)"/><path d="M0.5 15v-13.500h11" fill="none" stroke="#b4b4b4"/><path d="M11.500 2v13h-11" fill="none" stroke="#4a4f68"/><path d="M7.500 2.200h6l-1.200 1.600h-.8l-.6.900-.8-.900h-.7l-.6.900-.8-.900h-.5z" fill="#f1ee3c" stroke="#111" stroke-width=".9"/><path d="M3.900 0.600h3l1.500 2.700-1.500 2.700h-3l-1.500-2.700z" fill="#f1ee3c" stroke="#111" stroke-width="1.100"/><circle cx="5.300" cy="3.300" r=".9" fill="#222"/></svg><span class="t" style="left:106.6px;top:246px;font:400 12.4px/16px 'Liberation Sans', sans-serif;color:#000;letter-spacing:-0.361px;transform:scaleX(0.9704);transform-origin:0 0;">stm32f10x.h</span><svg style="left:85px;top:264px;" width="15" height="16" viewBox="0 0 15 16"><defs><linearGradient id="fg" x1="0" y1="0" x2="1" y2="1"><stop offset="0" stop-color="#fff"/><stop offset="1" stop-color="#bfcdf2"/></linearGradient></defs><rect x="0.5" y="1.5" width="11" height="13.5" fill="url(#fg)"/><path d="M0.5 15v-13.500h11" fill="none" stroke="#b4b4b4"/><path d="M11.500 2v13h-11" fill="none" stroke="#4a4f68"/><rect x="2" y="6" width="1" height="1" fill="#b9bccb"/><rect x="4" y="6" width="1" height="1" fill="#b9bccb"/><rect x="6" y="6" width="1" height="1" fill="#b9bccb"/><rect x="3" y="7" width="1" height="1" fill="#b9bccb"/><rect x="5" y="7" width="1" height="1" fill="#b9bccb"/><rect x="7" y="7" width="1" height="1" fill="#b9bccb"/><rect x="2" y="8" width="1" height="1" fill="#b9bccb"/><rect x="4" y="8" width="1" height="1" fill="#b9bccb"/><rect x="6" y="8" width="1" height="1" fill="#b9bccb"/><rect x="3" y="9" width="1" height="1" fill="#b9bccb"/><rect x="5" y="9" width="1" height="1" fill="#b9bccb"/><rect x="7" y="9" width="1" height="1" fill="#b9bccb"/><rect x="2" y="10" width="1" height="1" fill="#b9bccb"/><rect x="4" y="10" width="1" height="1" fill="#b9bccb"/><rect x="6" y="10" width="1" height="1" fill="#b9bccb"/><rect x="3" y="11" width="1" height="1" fill="#b9bccb"/><rect x="5" y="11" width="1" height="1" fill="#b9bccb"/><rect x="7" y="11" width="1" height="1" fill="#b9bccb"/><rect x="2" y="12" width="1" height="1" fill="#b9bccb"/><rect x="4" y="12" width="1" height="1" fill="#b9bccb"/><rect x="6" y="12" width="1" height="1" fill="#b9bccb"/><path d="M7.500 2.200h6l-1.200 1.600h-.8l-.6.900-.8-.900h-.7l-.6.900-.8-.900h-.5z" fill="#f1ee3c" stroke="#111" stroke-width=".9"/><path d="M3.900 0.600h3l1.500 2.700-1.500 2.700h-3l-1.500-2.700z" fill="#f1ee3c" stroke="#111" stroke-width="1.100"/><circle cx="5.300" cy="3.300" r=".9" fill="#222"/></svg><span class="t" style="left:106.6px;top:266px;font:400 12.4px/16px 'Liberation Sans', sans-serif;color:#000;letter-spacing:-0.361px;transform:scaleX(0.9692);transform-origin:0 0;">system_stm32f10x.c</span><svg style="left:85px;top:284px;" width="15" height="16" viewBox="0 0 15 16"><defs><linearGradient id="fg" x1="0" y1="0" x2="1" y2="1"><stop offset="0" stop-color="#fff"/><stop offset="1" stop-color="#bfcdf2"/></linearGradient></defs><rect x="0.5" y="1.5" width="11" height="13.5" fill="url(#fg)"/><path d="M0.5 15v-13.500h11" fill="none" stroke="#b4b4b4"/><path d="M11.500 2v13h-11" fill="none" stroke="#4a4f68"/><path d="M7.500 2.200h6l-1.200 1.600h-.8l-.6.900-.8-.900h-.7l-.6.900-.8-.900h-.5z" fill="#f1ee3c" stroke="#111" stroke-width=".9"/><path d="M3.900 0.600h3l1.500 2.700-1.500 2.700h-3l-1.500-2.700z" fill="#f1ee3c" stroke="#111" stroke-width="1.100"/><circle cx="5.300" cy="3.300" r=".9" fill="#222"/></svg><span class="t" style="left:106.6px;top:286px;font:400 12.4px/16px 'Liberation Sans', sans-serif;color:#000;letter-spacing:-0.362px;transform:scaleX(0.9676);transform-origin:0 0;">system_stm32f10x.h</span>
<div style="left:0px;top:843px;width:384px;height:24px;background:#f8f8f8;"></div>
<div style="left:0px;top:843px;width:384px;height:1px;background:#1c1c1c;"></div>
<div style="left:3px;top:843px;width:64px;height:23px;background:#f4f4f4;border:1px solid #1c1c1c;border-top:none;border-left:none;"></div>
<svg style="left:7px;top:847px;" width="14" height="13" viewBox="0 0 14 13"><rect x="0.500" y="0.500" width="13" height="12" fill="#ffffc4" stroke="#47618f"/><rect x="1" y="1" width="12" height="2.500" fill="#6a8fd0"/><path d="M3 5.500h2v2h-2zM3 9h2v2h-2zM6 6.500h5M6 10h5" stroke="#556" stroke-width=".9" fill="#9a9"/></svg><svg style="left:71px;top:846px;" width="17" height="16" viewBox="0 0 17 16"><path d="M1 8l7-7 8 4-6 9-7-1z" fill="#8a5ad8" stroke="#4a2a98"/><path d="M2 10l8 3 6-8" fill="none" stroke="#c9b8f0" stroke-width="1.500"/><circle cx="11" cy="11" r="4" fill="#4a7fe0" stroke="#dfe8ff" stroke-width=".8"/><text x="9" y="14" font-size="7" font-weight="700" fill="#fff" font-family="Liberation Sans, sans-serif">?</text></svg><span class="t" style="left:135px;top:847px;font:700 12px/15px 'Liberation Sans', sans-serif;color:#000;letter-spacing:0.660px;">{}</span><span class="t" style="left:213px;top:847px;font:700 12px/15px 'Liberation Sans', sans-serif;color:#000;letter-spacing:-0.445px;transform:scaleX(0.787);transform-origin:0 0;">{}</span><svg style="left:220px;top:855px;" width="9" height="7" viewBox="0 0 9 7"><path d="M0 2.500h4.500v-2.500l4 3.500-4 3.500v-2.500h-4.500z" fill="#2c4fc0"/></svg>
<span class="t" style="left:24px;top:848px;font:400 11px/14px 'Liberation Sans', sans-serif;color:#000;letter-spacing:-0.039px;">Project</span>
<span class="t" style="left:89px;top:848px;font:400 11px/14px 'Liberation Sans', sans-serif;color:#8a8a8a;letter-spacing:0.107px;">Books</span>
<span class="t" style="left:150px;top:848px;font:400 11px/14px 'Liberation Sans', sans-serif;color:#8a8a8a;letter-spacing:0.289px;">Functions</span>
<span class="t" style="left:230px;top:848px;font:400 11px/14px 'Liberation Sans', sans-serif;color:#8a8a8a;letter-spacing:-0.142px;">Templates</span>
<div style="left:127px;top:848px;width:1px;height:14px;background:#b8b8b8;"></div>
<div style="left:207px;top:848px;width:1px;height:14px;background:#b8b8b8;"></div>
<div style="left:289px;top:848px;width:1px;height:14px;background:#b8b8b8;"></div>
<div style="left:0px;top:867px;width:1920px;height:4px;background:#fff;"></div>
<div style="left:0px;top:871px;width:1920px;height:18px;background:linear-gradient(#d3dde9,#c9d7e6 45%,#cfdcec);"></div>
<span class="t" style="left:4.4px;top:874px;font:400 11px/14px 'Liberation Sans', sans-serif;color:#000;letter-spacing:0.615px;">Build Output</span>
<svg style="left:1887px;top:876px;" width="9" height="11" viewBox="0 0 9 11"><path d="M2 0.5h5.5M2.5 0.5v5M6.5 0v5.5M5.5 0.5v5M1 5.5h7.5M4.5 6v3" stroke="#000" stroke-width="1" fill="none"/></svg>
<div style="left:1904px;top:875px;width:12px;height:12px;background:#cf4a4d;"></div><svg style="left:1904px;top:875px;" width="12" height="12" viewBox="0 0 12 12"><path d="M3.700 3.700l4.600 4.600M8.300 3.700l-4.600 4.600" stroke="#fff" stroke-width="1.800"/></svg>
<div style="left:0px;top:891px;width:1919px;height:121px;background:#fff;border:1px solid #a0a0a0;border-left:2px solid #7a7a7a;border-top:2px solid #696969;border-right:none;border-bottom:1px solid #fdfdfd;"></div>
<div style="left:2px;top:995px;width:1900px;height:16px;background:#f0f0f0;"></div>
<div style="left:1901px;top:893px;width:17px;height:102px;background:#f0f0f0;"></div>
<div style="left:1901px;top:995px;width:19px;height:17px;background:#f0f0f0;"></div>
<svg style="left:0px;top:890px;" width="1920" height="125" viewBox="0 0 1920 125"><g fill="#a3a3a3"><path d="M7 112.5l6-4v8z"/><path d="M1895 112.5l-6-4v8z"/>
<path d="M1909.5 9l4 5h-8z"/><path d="M1909.5 98l4-5h-8z"/></g></svg>
<div style="left:0px;top:1012px;width:1920px;height:20px;background:#f0f0f0;border-top:1px solid #fafafa;"></div>
<div style="left:0px;top:1013px;width:1920px;height:1px;background:#d6d6d6;"></div>
<div style="left:1362px;top:1015px;width:1px;height:16px;background:#d4d4d4;box-shadow:1px 0 0 #fff;"></div>
<div style="left:1540px;top:1015px;width:1px;height:16px;background:#d4d4d4;box-shadow:1px 0 0 #fff;"></div>
<div style="left:1677px;top:1015px;width:1px;height:16px;background:#d4d4d4;box-shadow:1px 0 0 #fff;"></div>
<div style="left:1770px;top:1015px;width:1px;height:16px;background:#d4d4d4;box-shadow:1px 0 0 #fff;"></div>
<div style="left:1797px;top:1015px;width:1px;height:16px;background:#d4d4d4;box-shadow:1px 0 0 #fff;"></div>
<div style="left:1829px;top:1015px;width:1px;height:16px;background:#d4d4d4;box-shadow:1px 0 0 #fff;"></div>
<div style="left:1860px;top:1015px;width:1px;height:16px;background:#d4d4d4;box-shadow:1px 0 0 #fff;"></div>
<div style="left:1888px;top:1015px;width:1px;height:16px;background:#d4d4d4;box-shadow:1px 0 0 #fff;"></div>
<span class="t" style="left:1367px;top:1017px;font:400 11px/14px 'Liberation Sans', sans-serif;color:#000;letter-spacing:0.088px;">ULINK2/ME Cortex Debugger</span>
<span class="t" style="left:1775.5px;top:1017px;font:400 11px/14px 'Liberation Sans', sans-serif;color:#8a8a8a;letter-spacing:-0.402px;transform:scaleX(0.871);transform-origin:0 0;">CAP</span>
<span class="t" style="left:1801.5px;top:1017px;font:400 11px/14px 'Liberation Sans', sans-serif;color:#000;letter-spacing:-0.025px;">NUM</span>
<span class="t" style="left:1833.5px;top:1017px;font:400 11px/14px 'Liberation Sans', sans-serif;color:#8a8a8a;letter-spacing:-0.410px;transform:scaleX(0.8537);transform-origin:0 0;">SCRL</span>
<span class="t" style="left:1864.5px;top:1017px;font:400 11px/14px 'Liberation Sans', sans-serif;color:#8a8a8a;letter-spacing:-0.368px;transform:scaleX(0.9523);transform-origin:0 0;">OVR</span>
<span class="t" style="left:1893.5px;top:1017px;font:400 11px/14px 'Liberation Sans', sans-serif;color:#8a8a8a;letter-spacing:-0.146px;">R /W</span>
<div style="left:648px;top:278px;width:624px;height:469px;background:#f0f0f0;border-radius:8px;box-shadow:0 0 0 1px rgba(120,120,120,.30);"></div>
<div style="left:648px;top:278px;width:624px;height:32px;background:#f3f3f3;border-radius:8px 8px 0 0;"></div>
<svg style="left:657px;top:286px;" width="14" height="14" viewBox="0 0 14 14"><g transform="scale(1.0)"><rect x="0" y="0" width="14" height="14" rx="1.6" fill="#2f7d46"/>
<rect x="0.5" y="0.5" width="13" height="13" rx="1.4" fill="none" stroke="#215c33" stroke-width="1"/>
<text x="1.300" y="11.600" font-family="Liberation Sans, sans-serif" font-weight="700" font-size="12" fill="#fff" textLength="7.600" lengthAdjust="spacingAndGlyphs">V</text>
<text x="7.300" y="5.400" font-family="Liberation Sans, sans-serif" font-weight="700" font-size="5.500" fill="#e4f3e8">µ</text>
<text x="8.700" y="12.600" font-family="Liberation Sans, sans-serif" font-weight="700" font-size="6.800" fill="#fff">5</text></g></svg>
<span class="t" style="left:678px;top:287px;font:400 12px/15px 'Liberation Sans', sans-serif;color:#8d8d8d;letter-spacing:0.012px;">Options for Target 'Target 1'</span>
<svg style="left:1251px;top:287px;" width="12" height="12" viewBox="0 0 12 12"><path d="M1 1l10 10M11 1l-10 10" stroke="#8a8a8a" stroke-width="1"/></svg>
<div style="left:654px;top:334px;width:612px;height:377px;background:#f0f0f0;border:1px solid;border-color:#fff #696969 #696969 #fff;box-shadow:inset -1px -1px 0 #a0a0a0;"></div>
<div style="left:657px;top:317px;width:47px;height:18px;background:#f0f0f0;border:1px solid;border-color:#fff #868686 transparent #fff;border-bottom:none;box-shadow:inset -1px 0 0 #bdbdbd;border-radius:2px 2px 0 0;"></div>
<span class="t" style="left:662px;top:320px;font:400 11px/14px 'Liberation Mono', monospace;color:#000;-webkit-text-stroke:.15px #000;transform:scaleX(0.909);transform-origin:0 0;">Device</span>
<div style="left:705px;top:317px;width:47px;height:18px;background:#f0f0f0;border:1px solid;border-color:#fff #868686 transparent #fff;border-bottom:none;box-shadow:inset -1px 0 0 #bdbdbd;border-radius:2px 2px 0 0;"></div>
<span class="t" style="left:709.5px;top:320px;font:400 11px/14px 'Liberation Mono', monospace;color:#000;-webkit-text-stroke:.15px #000;transform:scaleX(0.909);transform-origin:0 0;">Target</span>
<div style="left:753px;top:317px;width:47px;height:18px;background:#f0f0f0;border:1px solid;border-color:#fff #868686 transparent #fff;border-bottom:none;box-shadow:inset -1px 0 0 #bdbdbd;border-radius:2px 2px 0 0;"></div>
<span class="t" style="left:757.5px;top:320px;font:400 11px/14px 'Liberation Mono', monospace;color:#000;-webkit-text-stroke:.15px #000;transform:scaleX(0.909);transform-origin:0 0;">Output</span>
<div style="left:801px;top:317px;width:53px;height:18px;background:#f0f0f0;border:1px solid;border-color:#fff #868686 transparent #fff;border-bottom:none;box-shadow:inset -1px 0 0 #bdbdbd;border-radius:2px 2px 0 0;"></div>
<span class="t" style="left:806px;top:320px;font:400 11px/14px 'Liberation Mono', monospace;color:#000;-webkit-text-stroke:.15px #000;transform:scaleX(0.909);transform-origin:0 0;">Listing</span>
<div style="left:855px;top:317px;width:47px;height:18px;background:#f0f0f0;border:1px solid;border-color:#fff #868686 transparent #fff;border-bottom:none;box-shadow:inset -1px 0 0 #bdbdbd;border-radius:2px 2px 0 0;"></div>
<span class="t" style="left:860px;top:320px;font:400 11px/14px 'Liberation Mono', monospace;color:#000;-webkit-text-stroke:.15px #000;transform:scaleX(0.909);transform-origin:0 0;">User</span>
<div style="left:983px;top:317px;width:45px;height:18px;background:#f0f0f0;border:1px solid;border-color:#fff #868686 transparent #fff;border-bottom:none;box-shadow:inset -1px 0 0 #bdbdbd;border-radius:2px 2px 0 0;"></div>
<span class="t" style="left:986px;top:320px;font:400 11px/14px 'Liberation Mono', monospace;color:#000;-webkit-text-stroke:.15px #000;transform:scaleX(0.909);transform-origin:0 0;">Asm</span>
<div style="left:1029px;top:317px;width:47px;height:18px;background:#f0f0f0;border:1px solid;border-color:#fff #868686 transparent #fff;border-bottom:none;box-shadow:inset -1px 0 0 #bdbdbd;border-radius:2px 2px 0 0;"></div>
<span class="t" style="left:1033.5px;top:320px;font:400 11px/14px 'Liberation Mono', monospace;color:#000;-webkit-text-stroke:.15px #000;transform:scaleX(0.909);transform-origin:0 0;">Linker</span>
<div style="left:1077px;top:317px;width:47px;height:18px;background:#f0f0f0;border:1px solid;border-color:#fff #868686 transparent #fff;border-bottom:none;box-shadow:inset -1px 0 0 #bdbdbd;border-radius:2px 2px 0 0;"></div>
<span class="t" style="left:1081.5px;top:320px;font:400 11px/14px 'Liberation Mono', monospace;color:#000;-webkit-text-stroke:.15px #000;transform:scaleX(0.909);transform-origin:0 0;">Debug</span>
<div style="left:1125px;top:317px;width:65px;height:18px;background:#f0f0f0;border:1px solid;border-color:#fff #868686 transparent #fff;border-bottom:none;box-shadow:inset -1px 0 0 #bdbdbd;border-radius:2px 2px 0 0;"></div>
<span class="t" style="left:1130px;top:320px;font:400 11px/14px 'Liberation Mono', monospace;color:#000;-webkit-text-stroke:.15px #000;transform:scaleX(0.909);transform-origin:0 0;">Utilities</span>
<div style="left:900px;top:315px;width:82px;height:21px;background:#f0f0f0;border:1px solid;border-color:#fff #868686 transparent #fff;border-bottom:none;box-shadow:inset -1px 0 0 #bdbdbd;border-radius:2px 2px 0 0;"></div>
<span class="t" style="left:907.5px;top:318px;font:400 11px/14px 'Liberation Mono', monospace;color:#000;-webkit-text-stroke:.15px #000;transform:scaleX(0.909);transform-origin:0 0;">C/C++ (AC6)</span>
<div class="gb" style="left:669px;top:360px;width:581px;height:73px;"></div>
<div style="left:678px;top:358px;width:110.5px;height:5px;background:#f0f0f0;"></div>
<span class="t" style="left:681px;top:354px;font:400 12px/15px 'Liberation Sans', sans-serif;color:#000;letter-spacing:-0.092px;transform:scaleX(0.87);transform-origin:0 0;">Preprocessor Symbols</span>
<span class="t" style="left:695.5px;top:382px;font:400 12px/15px 'Liberation Sans', sans-serif;color:#000;letter-spacing:-0.015px;transform:scaleX(0.87);transform-origin:0 0;"><u>D</u>efine:</span>
<span class="t" style="left:683.5px;top:406px;font:400 12px/15px 'Liberation Sans', sans-serif;color:#000;letter-spacing:0.044px;transform:scaleX(0.87);transform-origin:0 0;">U<u>n</u>define:</span>
<div class="sunk" style="left:735px;top:377px;width:503px;height:22px;background:#fff;"></div>
<div class="sunk" style="left:735px;top:403px;width:503px;height:22px;background:#f0f0f0;"></div>
<div class="gb" style="left:669px;top:445px;width:581px;height:121px;"></div>
<div style="left:678px;top:443px;width:145.5px;height:5px;background:#f0f0f0;"></div>
<span class="t" style="left:681px;top:439px;font:400 12px/15px 'Liberation Sans', sans-serif;color:#000;letter-spacing:0.176px;transform:scaleX(0.87);transform-origin:0 0;">Language / Code Generation</span>
<div class="sunk" style="left:675px;top:457px;width:13px;height:13px;background:#fff;"></div>
<span class="t" style="left:693px;top:457px;font:400 12px/15px 'Liberation Sans', sans-serif;color:#000;letter-spacing:-0.015px;transform:scaleX(0.87);transform-origin:0 0;">Execute-only Code</span>
<span class="t" style="left:865px;top:456px;font:400 12px/15px 'Liberation Sans', sans-serif;color:#000;letter-spacing:0.128px;transform:scaleX(0.87);transform-origin:0 0;"><u>W</u>arnings:</span>
<div class="sunk" style="left:920px;top:453px;width:116px;height:20px;background:#fff;"></div>
<div class="btn" style="left:1018px;top:455px;width:17px;height:17px;"></div>
<svg style="left:1022.5px;top:461.5px;" width="8" height="4" viewBox="0 0 8 4"><path d="M0 0h7l-3.500 4z" fill="#000"/></svg>
<span class="t" style="left:924px;top:457px;font:400 12px/15px 'Liberation Sans', sans-serif;color:#000;letter-spacing:0.030px;transform:scaleX(0.87);transform-origin:0 0;">All Warnings</span>
<span class="t" style="left:1057px;top:456px;font:400 12px/15px 'Liberation Sans', sans-serif;color:#000;letter-spacing:0.082px;transform:scaleX(0.87);transform-origin:0 0;">Language C:</span>
<div class="sunk" style="left:1124px;top:453px;width:110px;height:20px;background:#fff;"></div>
<div class="btn" style="left:1216px;top:455px;width:17px;height:17px;"></div>
<svg style="left:1220.5px;top:461.5px;" width="8" height="4" viewBox="0 0 8 4"><path d="M0 0h7l-3.500 4z" fill="#000"/></svg>
<span class="t" style="left:1127.5px;top:457px;font:400 12px/15px 'Liberation Sans', sans-serif;color:#000;letter-spacing:0.958px;transform:scaleX(0.87);transform-origin:0 0;">c99</span>
<span class="t" style="left:674.5px;top:481px;font:400 12px/15px 'Liberation Sans', sans-serif;color:#000;letter-spacing:-0.040px;transform:scaleX(0.87);transform-origin:0 0;"><u>O</u>ptimization:</span>
<div class="sunk" style="left:744px;top:478px;width:110px;height:20px;background:#fff;"></div>
<div class="btn" style="left:836px;top:480px;width:17px;height:17px;"></div>
<svg style="left:840.5px;top:486.5px;" width="8" height="4" viewBox="0 0 8 4"><path d="M0 0h7l-3.500 4z" fill="#000"/></svg>
<span class="t" style="left:747.5px;top:482px;font:400 12px/15px 'Liberation Sans', sans-serif;color:#000;letter-spacing:-0.519px;transform:scaleX(0.87);transform-origin:0 0;">-O1</span>
<div class="sunk" style="left:864px;top:482px;width:13px;height:13px;background:#fff;"></div>
<span class="t" style="left:882.5px;top:482px;font:400 12px/15px 'Liberation Sans', sans-serif;color:#000;letter-spacing:-0.011px;transform:scaleX(0.87);transform-origin:0 0;">Turn Warnings into Errors</span>
<span class="t" style="left:1045px;top:484px;font:400 12px/15px 'Liberation Sans', sans-serif;color:#000;letter-spacing:0.049px;transform:scaleX(0.87);transform-origin:0 0;">Language C++:</span>
<div class="sunk" style="left:1124px;top:481px;width:110px;height:20px;background:#fff;"></div>
<div class="btn" style="left:1216px;top:483px;width:17px;height:17px;"></div>
<svg style="left:1220.5px;top:489.5px;" width="8" height="4" viewBox="0 0 8 4"><path d="M0 0h7l-3.500 4z" fill="#000"/></svg>
<span class="t" style="left:1127.5px;top:485px;font:400 12px/15px 'Liberation Sans', sans-serif;color:#000;letter-spacing:0.359px;transform:scaleX(0.87);transform-origin:0 0;">c++11</span>
<div class="sunk" style="left:675px;top:505px;width:13px;height:13px;background:#fff;"></div>
<span class="t" style="left:693px;top:505px;font:400 12px/15px 'Liberation Sans', sans-serif;color:#000;letter-spacing:-0.047px;transform:scaleX(0.87);transform-origin:0 0;">Link-Time Optimization</span>
<div class="sunk" style="left:903px;top:503px;width:13px;height:13px;background:#fff;"></div>
<span class="t" style="left:921px;top:503px;font:400 12px/15px 'Liberation Sans', sans-serif;color:#000;letter-spacing:-0.066px;transform:scaleX(0.87);transform-origin:0 0;"><u>P</u>lain Char is Signed</span>
<div class="sunk" style="left:1103px;top:505px;width:13px;height:13px;background:#fff;"></div>
<svg style="left:1103px;top:505px;" width="13" height="13" viewBox="0 0 13 13"><path d="M3 6l2.500 2.800 4.500-5.600" stroke="#000" stroke-width="1.900" fill="none"/></svg>
<span class="t" style="left:1121px;top:505px;font:400 12px/15px 'Liberation Sans', sans-serif;color:#000;letter-spacing:0.220px;transform:scaleX(0.87);transform-origin:0 0;"><u>S</u>hort enums/wchar</span>
<div class="sunk" style="left:675px;top:526px;width:13px;height:13px;background:#fff;"></div>
<span class="t" style="left:693px;top:526px;font:400 12px/15px 'Liberation Sans', sans-serif;color:#000;letter-spacing:0.042px;transform:scaleX(0.87);transform-origin:0 0;"><u>S</u>plit Load and Store Multiple</span>
<div class="sunk" style="left:903px;top:524px;width:13px;height:13px;background:#fff;"></div>
<span class="t" style="left:921px;top:524px;font:400 12px/15px 'Liberation Sans', sans-serif;color:#000;letter-spacing:0.063px;transform:scaleX(0.87);transform-origin:0 0;">Read-Onl<u>y</u> Position Independent</span>
<div class="sunk" style="left:1103px;top:524px;width:13px;height:13px;background:#fff;"></div>
<span class="t" style="left:1120.5px;top:524px;font:400 12px/15px 'Liberation Sans', sans-serif;color:#000;letter-spacing:0.371px;transform:scaleX(0.87);transform-origin:0 0;">use RTTI</span>
<div class="sunk" style="left:675px;top:546px;width:13px;height:13px;background:#fff;"></div>
<svg style="left:675px;top:546px;" width="13" height="13" viewBox="0 0 13 13"><path d="M3 6l2.500 2.800 4.500-5.600" stroke="#000" stroke-width="1.900" fill="none"/></svg>
<span class="t" style="left:692.5px;top:546px;font:400 12px/15px 'Liberation Sans', sans-serif;color:#000;letter-spacing:0.109px;transform:scaleX(0.87);transform-origin:0 0;">One <u>E</u>LF Section per Function</span>
<div class="sunk" style="left:903px;top:544px;width:13px;height:13px;background:#fff;"></div>
<span class="t" style="left:921px;top:544px;font:400 12px/15px 'Liberation Sans', sans-serif;color:#000;letter-spacing:0.092px;transform:scaleX(0.87);transform-origin:0 0;"><u>R</u>ead-Write Position Independent</span>
<div class="sunk" style="left:1103px;top:544px;width:13px;height:13px;background:#fff;"></div>
<span class="t" style="left:1121px;top:544px;font:400 12px/15px 'Liberation Sans', sans-serif;color:#000;letter-spacing:0.153px;transform:scaleX(0.87);transform-origin:0 0;">No Auto Includes</span>
<span class="t" style="left:687.5px;top:577px;font:400 12px/15px 'Liberation Sans', sans-serif;color:#000;letter-spacing:0.256px;transform:scaleX(0.87);transform-origin:0 0;"><u>I</u>nclude</span>
<span class="t" style="left:696px;top:590px;font:400 12px/15px 'Liberation Sans', sans-serif;color:#000;letter-spacing:-0.056px;transform:scaleX(0.87);transform-origin:0 0;">Paths</span>
<div class="sunk" style="left:735px;top:577px;width:483px;height:23px;background:#fff;"></div>
<div class="btn" style="left:1221px;top:577px;width:18px;height:23px;"></div>
<span class="t" style="left:1226px;top:580px;font:400 11px/14px 'Liberation Sans', sans-serif;color:#000;letter-spacing:-0.369px;transform:scaleX(0.9489);transform-origin:0 0;">...</span>
<span class="t" style="left:701px;top:606px;font:400 12px/15px 'Liberation Sans', sans-serif;color:#000;letter-spacing:0.017px;transform:scaleX(0.87);transform-origin:0 0;"><u>M</u>isc</span>
<span class="t" style="left:684.5px;top:619px;font:400 12px/15px 'Liberation Sans', sans-serif;color:#000;letter-spacing:-0.144px;transform:scaleX(0.87);transform-origin:0 0;">Controls</span>
<div class="sunk" style="left:735px;top:608px;width:503px;height:23px;background:#fff;"></div>
<span class="t" style="left:682.5px;top:642px;font:400 12px/15px 'Liberation Sans', sans-serif;color:#000;letter-spacing:-0.291px;transform:scaleX(0.87);transform-origin:0 0;">Compiler</span>
<span class="t" style="left:690.5px;top:655px;font:400 12px/15px 'Liberation Sans', sans-serif;color:#000;letter-spacing:0.127px;transform:scaleX(0.87);transform-origin:0 0;">control</span>
<span class="t" style="left:697.5px;top:668px;font:400 12px/15px 'Liberation Sans', sans-serif;color:#000;letter-spacing:-0.122px;transform:scaleX(0.87);transform-origin:0 0;">string</span>
<div class="sunk" style="left:740px;top:642px;width:503px;height:44px;background:#f0f0f0;"></div>
<div style="left:1225px;top:644px;width:1px;height:40px;background:#fafafa;"></div>
<span class="t" style="left:743.5px;top:645px;font:400 12px/15px 'Liberation Sans', sans-serif;color:#000;letter-spacing:-0.064px;transform:scaleX(0.87);transform-origin:0 0;">-xc -std=c99 --target=arm-arm-none-eabi -mcpu=cortex-m3 -c</span>
<span class="t" style="left:743.5px;top:658px;font:400 12px/15px 'Liberation Sans', sans-serif;color:#000;letter-spacing:-0.047px;transform:scaleX(0.87);transform-origin:0 0;">-fno-rtti -funsigned-char -fshort-enums -fshort-wchar</span>
<div class="btn" style="left:812px;top:717px;width:92px;height:24px;"></div>
<span class="t" style="left:851.5px;top:722px;font:400 11px/14px 'Liberation Mono', monospace;color:#000;-webkit-text-stroke:.15px #000;transform:scaleX(0.909);transform-origin:0 0;">OK</span>
<div class="btn" style="left:914px;top:717px;width:92px;height:24px;"></div>
<span class="t" style="left:941.5px;top:722px;font:400 11px/14px 'Liberation Mono', monospace;color:#000;-webkit-text-stroke:.15px #000;transform:scaleX(0.909);transform-origin:0 0;">Cancel</span>
<div class="btn" style="left:1016px;top:717px;width:92px;height:24px;"></div>
<span class="t" style="left:1037.5px;top:722px;font:400 11px/14px 'Liberation Mono', monospace;color:#000;-webkit-text-stroke:.15px #000;transform:scaleX(0.909);transform-origin:0 0;">Defaults</span>
<div class="btn" style="left:1174px;top:717px;width:92px;height:24px;"></div>
<span class="t" style="left:1207.5px;top:722px;font:400 11px/14px 'Liberation Mono', monospace;color:#000;-webkit-text-stroke:.15px #000;transform:scaleX(0.909);transform-origin:0 0;">Help</span>
<div style="left:1314px;top:341px;width:500px;height:340px;background:#f0f0f0;border-radius:8px;box-shadow:0 0 0 1px rgba(120,120,120,.30);"></div>
<div style="left:1314px;top:341px;width:500px;height:30px;background:#f3f3f3;border-radius:8px 8px 0 0;"></div>
<span class="t" style="left:1322.5px;top:349px;font:400 12px/15px 'Liberation Sans', sans-serif;color:#000;letter-spacing:-0.246px;">Folder Setup</span>
<span class="t" style="left:1742px;top:349px;font:700 12px/15px 'Liberation Sans', sans-serif;color:#000;">?</span>
<svg style="left:1785px;top:349px;" width="12" height="12" viewBox="0 0 12 12"><path d="M1 1l10 10M11 1l-10 10" stroke="#1a1a1a" stroke-width="1.100"/></svg>
<div style="left:1316px;top:378px;width:496px;height:23px;background:#f0f0f0;border:1px solid;border-color:#a0a0a0 #fff #fff #a0a0a0;"></div>
<span class="t" style="left:1319px;top:383px;font:400 12px/15px 'Liberation Sans', sans-serif;color:#000;letter-spacing:-0.021px;transform:scaleX(0.87);transform-origin:0 0;">Setup Compiler Include Paths:</span>
<div style="left:1724px;top:380px;width:22px;height:19px;background:#f0f0f0;border:1px solid;border-color:#fff #a0a0a0 #a0a0a0 #fff;"></div>
<div style="left:1746px;top:380px;width:22px;height:19px;background:#f0f0f0;border:1px solid;border-color:#fff #a0a0a0 #a0a0a0 #fff;"></div>
<div style="left:1768px;top:380px;width:22px;height:19px;background:#f0f0f0;border:1px solid;border-color:#fff #a0a0a0 #a0a0a0 #fff;"></div>
<div style="left:1790px;top:380px;width:22px;height:19px;background:#f0f0f0;border:1px solid;border-color:#fff #a0a0a0 #a0a0a0 #fff;"></div>
<svg style="left:1726px;top:381px;" width="16" height="15" viewBox="0 0 16 15"><rect x="2.500" y="3.500" width="11" height="10" fill="#eef0fa" stroke="#111" stroke-width="1" stroke-dasharray="1.500 1.500"/><path d="M3 0v6M0 3h6M1 1l4 4M5 1l-4 4" stroke="#e6e64a" stroke-width="1"/></svg>
<svg style="left:1750px;top:382px;" width="14" height="14" viewBox="0 0 14 14"><path d="M1.500 1.500l10 11.500M11.500 1.500l-9.500 11.500" stroke="#8a0808" stroke-width="1.900"/></svg>
<svg style="left:1771px;top:383px;" width="14" height="14" viewBox="0 0 14 14"><path d="M7 0.500l6 6.500h-4c0 3-1 5-5 6.500 1.500-1.500 2-3 1.500-6.500h-4.500z" fill="#000"/></svg>
<svg style="left:1793px;top:383px;" width="14" height="14" viewBox="0 0 14 14"><path d="M7 13.500l6-6.500h-4c0-3 1-5 4-6.500-4 0-7 1.500-7 6.500h-5z" fill="#000"/></svg>
<div style="left:1316px;top:402px;width:496px;height:248px;background:#fff;border:1px solid;border-color:#696969 #fff #fff #696969;box-shadow:inset 1px 1px 0 #a0a0a0;"></div>
<div style="left:1484px;top:657px;width:75px;height:23px;background:#4a4a4a;"></div>
<div class="btn" style="left:1485px;top:658px;width:73px;height:21px;"></div>
<span class="t" style="left:1513.5px;top:661px;font:400 12px/15px 'Liberation Sans', sans-serif;color:#000;letter-spacing:0.478px;transform:scaleX(0.87);transform-origin:0 0;">OK</span>
<div class="btn" style="left:1568px;top:657px;width:75px;height:23px;"></div>
<span class="t" style="left:1588px;top:661px;font:400 12px/15px 'Liberation Sans', sans-serif;color:#000;letter-spacing:0.230px;transform:scaleX(0.87);transform-origin:0 0;">Cancel</span>
<div style="left:1299px;top:317px;width:539px;height:385px;border:6px solid #f95353;border-radius:2px;"></div>
<div style="left:1715.2px;top:371px;width:35.7px;height:34.8px;border:5.9px solid #f95353;border-radius:3.5px;"></div>
<svg style="left:0px;top:0px;pointer-events:none;" width="1920" height="1032" viewBox="0 0 1920 1032"><path d="M1318.500 851.600L1697.930 427.220 1693.500 423.200 1718 411 1708.300 436.600 1703.870 432.580 1319.500 852.400Z" fill="#f95353"/></svg></body></html>
